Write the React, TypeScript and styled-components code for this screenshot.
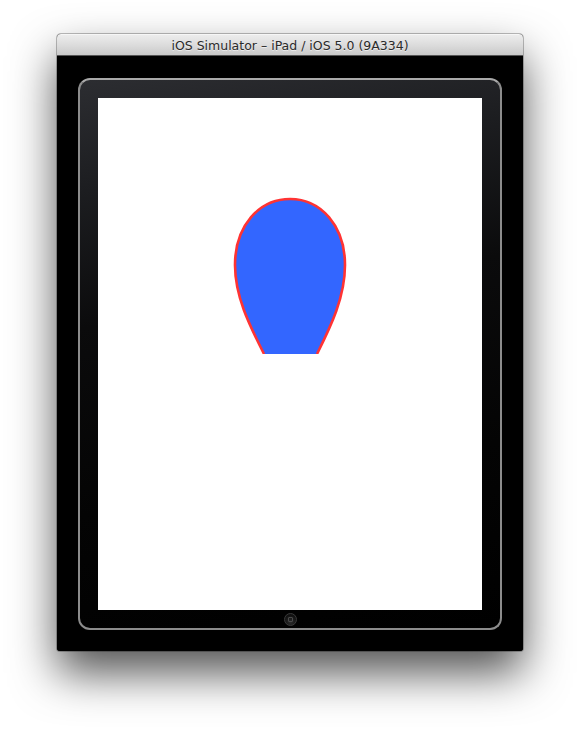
import React from "react";
import styled, { createGlobalStyle } from "styled-components";

const Global = createGlobalStyle`
  html, body { margin: 0; padding: 0; background: #ffffff; }
  body { width: 580px; height: 730px; overflow: hidden; }
`;

const Page = styled.div`
  width: 580px;
  height: 730px;
  display: flex;
  justify-content: center;
  padding-top: 34px;
  box-sizing: border-box;
`;

const Window = styled.div`
  width: 466px;
  height: 617px;
  display: flex;
  flex-direction: column;
  border-radius: 4px 4px 3px 3px;
  overflow: hidden;
  background: #000;
  box-shadow: 0 22px 45px rgba(0, 0, 0, 0.68), 0 0 0 1px rgba(0, 0, 0, 0.25);
`;

const TitleBar = styled.div`
  height: 22px;
  flex: none;
  display: flex;
  align-items: center;
  justify-content: center;
  background: linear-gradient(to bottom, #ececec 0%, #dcdcdc 50%, #c9c9c9 100%);
  border-top: 1px solid #f6f6f6;
  box-sizing: border-box;
  border-bottom: 1px solid #555;
`;

const Title = styled.span`
  font-family: "DejaVu Sans", "Liberation Sans", sans-serif;
  font-size: 12.5px;
  color: #2a2a2a;
  text-shadow: 0 1px 0 rgba(255, 255, 255, 0.6);
  margin-top: 1px;
`;

const Body = styled.div`
  flex: 1;
  min-height: 0;
  padding: 22px 21px 21px 21px;
  display: flex;
  background: #000;
`;

const Bezel = styled.div`
  flex: 1;
  border: 2px solid #8c8c8c;
  border-top-color: #a9a9a9;
  border-radius: 12px;
  padding: 18px 18px 0 18px;
  display: flex;
  flex-direction: column;
  background: linear-gradient(170deg, #2c2d31 0%, #1c1d20 18%, #0b0b0c 40%, #040404 70%, #000 100%);
`;

const Screen = styled.div`
  width: 384px;
  height: 512px;
  flex: none;
  background: #ffffff;
  display: flex;
  justify-content: center;
  padding-top: 99px;
  box-sizing: border-box;
`;

const HomeRow = styled.div`
  height: 18px;
  flex: none;
  display: flex;
  justify-content: center;
  align-items: center;
`;

const HomeButton = styled.div`
  width: 11px;
  height: 11px;
  border-radius: 50%;
  border: 1px solid #3a3a3a;
  background: radial-gradient(circle at 50% 75%, #2a2a2a 0%, #111 70%);
  display: flex;
  align-items: center;
  justify-content: center;
`;

const HomeSquare = styled.div`
  width: 3px;
  height: 3px;
  border: 1px solid #4a4a4a;
  border-radius: 1px;
`;

const Drop = () => (
  <svg width="116" height="157" viewBox="232 197 116 157" style={{ display: "block" }}>
    <path
      d="M 264 354 C 250 326 235 297 235 265 C 235 226 259 199 290 199 C 321 199 345 226 345 265 C 345 297 331 326 317 354 Z"
      fill="#3366ff"
    />
    <path
      d="M 264 354 C 250 326 235 297 235 265 C 235 226 259 199 290 199 C 321 199 345 226 345 265 C 345 297 331 326 317 354"
      fill="none"
      stroke="#ff3333"
      strokeWidth="2.6"
    />
  </svg>
);

export default function App() {
  return (
    <>
      <Global />
      <Page>
        <Window>
          <TitleBar>
            <Title>iOS Simulator – iPad / iOS 5.0 (9A334)</Title>
          </TitleBar>
          <Body>
            <Bezel>
              <Screen>
                <Drop />
              </Screen>
              <HomeRow>
                <HomeButton>
                  <HomeSquare />
                </HomeButton>
              </HomeRow>
            </Bezel>
          </Body>
        </Window>
      </Page>
    </>
  );
}
